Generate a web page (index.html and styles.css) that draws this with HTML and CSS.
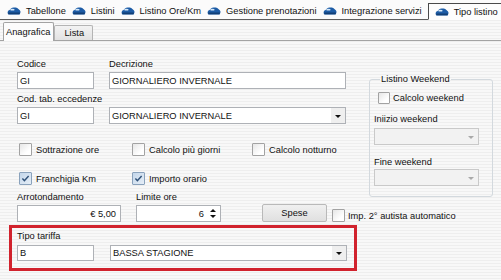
FILE: index.html
```html
<!DOCTYPE html>
<html lang="it">
<head>
    <meta charset="UTF-8">
    <meta name="viewport" content="width=device-width, initial-scale=1.0">
    <title>Tipo listino</title>
    <link rel="stylesheet" href="styles.css">
</head>
<body>
    <div class="toolbar">
        <div class="tool">
            <svg class="car" viewBox="0 0 14 8"><path d="M0.6 5.2 Q0.6 3.3 2.6 3 L4 1.4 Q5 0.5 6.8 0.5 L8.8 0.5 Q10.4 0.6 11.4 1.9 L12.8 3.3 Q13.8 3.8 13.4 5.8 L12.6 7.4 L1.4 7.4 Q0.5 6.8 0.6 5.2Z" fill="#1d5ca6"/><path d="M1.2 5.6 L13 5.6 L12.5 7.3 L1.5 7.3Z" fill="#123f75"/><ellipse cx="5.4" cy="2.7" rx="2.2" ry="0.9" fill="#d6e8f8"/></svg>
            <span>Tabellone</span>
        </div>
        <div class="sep"></div>
        <div class="tool">
            <svg class="car" viewBox="0 0 14 8"><path d="M0.6 5.2 Q0.6 3.3 2.6 3 L4 1.4 Q5 0.5 6.8 0.5 L8.8 0.5 Q10.4 0.6 11.4 1.9 L12.8 3.3 Q13.8 3.8 13.4 5.8 L12.6 7.4 L1.4 7.4 Q0.5 6.8 0.6 5.2Z" fill="#1d5ca6"/><path d="M1.2 5.6 L13 5.6 L12.5 7.3 L1.5 7.3Z" fill="#123f75"/><ellipse cx="5.4" cy="2.7" rx="2.2" ry="0.9" fill="#d6e8f8"/></svg>
            <span>Listini</span>
        </div>
        <div class="sep"></div>
        <div class="tool">
            <svg class="car" viewBox="0 0 14 8"><path d="M0.6 5.2 Q0.6 3.3 2.6 3 L4 1.4 Q5 0.5 6.8 0.5 L8.8 0.5 Q10.4 0.6 11.4 1.9 L12.8 3.3 Q13.8 3.8 13.4 5.8 L12.6 7.4 L1.4 7.4 Q0.5 6.8 0.6 5.2Z" fill="#1d5ca6"/><path d="M1.2 5.6 L13 5.6 L12.5 7.3 L1.5 7.3Z" fill="#123f75"/><ellipse cx="5.4" cy="2.7" rx="2.2" ry="0.9" fill="#d6e8f8"/></svg>
            <span>Listino Ore/Km</span>
        </div>
        <div class="sep"></div>
        <div class="tool">
            <svg class="car" viewBox="0 0 14 8"><path d="M0.6 5.2 Q0.6 3.3 2.6 3 L4 1.4 Q5 0.5 6.8 0.5 L8.8 0.5 Q10.4 0.6 11.4 1.9 L12.8 3.3 Q13.8 3.8 13.4 5.8 L12.6 7.4 L1.4 7.4 Q0.5 6.8 0.6 5.2Z" fill="#1d5ca6"/><path d="M1.2 5.6 L13 5.6 L12.5 7.3 L1.5 7.3Z" fill="#123f75"/><ellipse cx="5.4" cy="2.7" rx="2.2" ry="0.9" fill="#d6e8f8"/></svg>
            <span>Gestione prenotazioni</span>
        </div>
        <div class="sep"></div>
        <div class="tool">
            <svg class="car" viewBox="0 0 14 8"><path d="M0.6 5.2 Q0.6 3.3 2.6 3 L4 1.4 Q5 0.5 6.8 0.5 L8.8 0.5 Q10.4 0.6 11.4 1.9 L12.8 3.3 Q13.8 3.8 13.4 5.8 L12.6 7.4 L1.4 7.4 Q0.5 6.8 0.6 5.2Z" fill="#1d5ca6"/><path d="M1.2 5.6 L13 5.6 L12.5 7.3 L1.5 7.3Z" fill="#123f75"/><ellipse cx="5.4" cy="2.7" rx="2.2" ry="0.9" fill="#d6e8f8"/></svg>
            <span>Integrazione servizi</span>
        </div>
        <div class="tool active">
            <svg class="car" viewBox="0 0 14 8"><path d="M0.6 5.2 Q0.6 3.3 2.6 3 L4 1.4 Q5 0.5 6.8 0.5 L8.8 0.5 Q10.4 0.6 11.4 1.9 L12.8 3.3 Q13.8 3.8 13.4 5.8 L12.6 7.4 L1.4 7.4 Q0.5 6.8 0.6 5.2Z" fill="#1d5ca6"/><path d="M1.2 5.6 L13 5.6 L12.5 7.3 L1.5 7.3Z" fill="#123f75"/><ellipse cx="5.4" cy="2.7" rx="2.2" ry="0.9" fill="#d6e8f8"/></svg>
            <span>Tipo listino</span>
        </div>
    </div>

    <div class="subtabs">
        <div class="subtab current">Anagrafica</div>
        <div class="subtab">Lista</div>
    </div>

    <div class="panel">
        <div class="row row-code">
            <div class="field w-code">
                <label>Codice</label>
                <div class="edit w-code">GI</div>
            </div>
            <div class="field">
                <label>Decrizione</label>
                <div class="edit w-desc">GIORNALIERO INVERNALE</div>
            </div>
        </div>

        <div class="row row-code">
            <div class="field w-code">
                <label>Cod. tab. eccedenze</label>
                <div class="edit w-code">GI</div>
            </div>
            <div class="combo w-desc">
                <span class="combo-text">GIORNALIERO INVERNALE</span>
                <span class="drop"></span>
            </div>
        </div>

        <div class="checks checks-1">
            <div class="check"><span class="box"></span>Sottrazione ore</div>
            <div class="check"><span class="box"></span>Calcolo più giorni</div>
            <div class="check"><span class="box"></span>Calcolo notturno</div>
        </div>

        <div class="checks checks-2">
            <div class="check"><span class="box on"><svg viewBox="0 0 13 13"><polyline points="2.8,6.6 5.2,9 10.2,3.6" fill="none" stroke="#2f5178" stroke-width="1.7"/></svg></span>Franchigia Km</div>
            <div class="check"><span class="box on"><svg viewBox="0 0 13 13"><polyline points="2.8,6.6 5.2,9 10.2,3.6" fill="none" stroke="#2f5178" stroke-width="1.7"/></svg></span>Importo orario</div>
        </div>

        <fieldset class="group">
            <legend>Listino Weekend</legend>
            <div class="check small"><span class="box"></span>Calcolo weekend</div>
            <label class="group-label first">Iniizio weekend</label>
            <div class="combo disabled w-week"><span class="drop"></span></div>
            <label class="group-label">Fine weekend</label>
            <div class="combo disabled w-week"><span class="drop"></span></div>
        </fieldset>

        <div class="row row-amount">
            <div class="field">
                <label>Arrotondamento</label>
                <div class="edit w-round num">€ 5,00</div>
            </div>
            <div class="field">
                <label>Limite ore</label>
                <div class="edit spin w-limit">
                    <span class="spin-value">6</span>
                    <span class="spin-btns"><span class="up"></span><span class="down"></span></span>
                </div>
            </div>
            <button class="btn">Spese</button>
            <div class="check auto"><span class="box"></span>Imp. 2° autista automatico</div>
        </div>

        <div class="highlight">
            <label>Tipo tariffa</label>
            <div class="row">
                <div class="edit w-code thin">B</div>
                <div class="combo w-desc thin">
                    <span class="combo-text">BASSA STAGIONE</span>
                    <span class="drop"></span>
                </div>
            </div>
        </div>
    </div>
</body>
</html>
```

FILE: styles.css
```css
body {
    margin: 0;
    width: 501px;
    height: 280px;
    overflow: hidden;
    font-family: "Liberation Sans", Arial, sans-serif;
    font-size: 9.3px;
    line-height: 12px;
    color: #111;
    background: repeating-linear-gradient(to bottom, #f8f8f8 0, #f8f8f8 2px, #eeeeee 2px, #eeeeee 3px);
}

/* top toolbar */
.toolbar {
    box-sizing: border-box;
    display: flex;
    height: 20px;
    padding: 2px 0 0 7px;
    border-bottom: 1px solid #5c5c5c;
    background: #fbfbfb;
}

.tool {
    display: flex;
    align-items: center;
    gap: 5px;
    white-space: nowrap;
}

.car {
    width: 14px;
    height: 8px;
    flex: none;
}

.sep {
    width: 1px;
    height: 13px;
    margin: 2px 3px 0 3px;
    background: #8a8a8a;
}

.tool.active {
    margin: 1px 0 -1px 6px;
    padding: 1px 3px 0 6px;
    border: 1px solid #4a4a4a;
    border-bottom: 1px solid #fdfdfd;
    background: #fdfdfd;
}

/* sub tabs */
.subtabs {
    box-sizing: border-box;
    display: flex;
    align-items: flex-end;
    height: 21px;
    padding-left: 3px;
    border-bottom: 1px solid #a3a3a3;
}

.subtab {
    box-sizing: border-box;
    height: 15px;
    padding: 1px 8px 0 9px;
    border: 1px solid #b4b4b4;
    border-bottom: none;
    border-radius: 2px 2px 0 0;
    background: linear-gradient(to bottom, #f3f3f3, #e2e2e2);
}

.subtab.current {
    height: 19px;
    margin-bottom: -1px;
    padding: 3px 3px 0 2px;
    border-color: #a3a3a3;
    background: #fcfcfc;
}

/* form panel */
.panel {
    display: grid;
    grid-template-columns: 352px 124px;
    grid-template-rows: 35px 35px 37px 25px 34px 48px;
    padding: 17px 0 0 17px;
}

.row {
    display: flex;
    align-items: flex-end;
    gap: 15px;
    grid-column: 1;
}

.row-code {
    align-items: flex-start;
}

.row-code .combo {
    margin-top: 14px;
}

.field {
    flex: none;
}

.field label {
    display: block;
    margin-bottom: 2px;
    white-space: nowrap;
}

.edit,
.combo {
    box-sizing: border-box;
    display: flex;
    align-items: center;
    height: 17px;
    padding: 0 2px;
    border: 1px solid #aeb1b6;
    background: #fff;
    white-space: nowrap;
}

.thin {
    height: 16px;
}

.w-code { width: 77px; }
.w-desc { width: 237px; }
.w-round { width: 104px; }
.w-limit { width: 85px; }
.w-week { width: 105px; }

.num {
    justify-content: flex-end;
    padding-right: 4px;
}

.combo {
    padding-right: 0;
}

.combo-text {
    flex: 1;
}

.drop {
    display: flex;
    align-items: center;
    justify-content: center;
    align-self: stretch;
    width: 14px;
    margin-left: auto;
    background: #efefef;
}

.drop::after {
    content: "";
    border-left: 3px solid transparent;
    border-right: 3px solid transparent;
    border-top: 3px solid #111;
    margin-top: 1px;
}

.combo.disabled {
    height: 17px;
    border-color: #c9c9c9;
    background: #f2f2f2;
}

.combo.disabled .drop {
    background: transparent;
}

.combo.disabled .drop::after {
    border-top-color: #a9a9a9;
}

/* spin edit */
.spin {
    padding-right: 1px;
}

.spin-value {
    flex: 1;
    text-align: right;
    padding-right: 3px;
}

.spin-btns {
    display: flex;
    flex-direction: column;
    justify-content: center;
    align-items: center;
    gap: 3px;
    width: 12px;
    align-self: stretch;
}

.spin-btns .up {
    border-left: 3px solid transparent;
    border-right: 3px solid transparent;
    border-bottom: 3px solid #111;
}

.spin-btns .down {
    border-left: 3px solid transparent;
    border-right: 3px solid transparent;
    border-top: 3px solid #111;
}

/* checkboxes */
.checks {
    display: grid;
    grid-template-columns: 113px 120px auto;
    align-items: start;
    grid-column: 1;
    padding-left: 2px;
}

.checks-1 { padding-top: 15px; }
.checks-2 { padding-top: 7px; }

.check {
    display: flex;
    align-items: center;
    gap: 4px;
    white-space: nowrap;
}

.box {
    box-sizing: border-box;
    display: flex;
    width: 13px;
    height: 13px;
    flex: none;
    border: 1px solid #a2a2a2;
    border-radius: 1px;
    background: linear-gradient(135deg, #e6e6e6, #ffffff 70%);
}

.box.on {
    border-color: #8aa2bc;
    background: linear-gradient(135deg, #c3d6ea, #e6eef7);
}

.box svg {
    width: 11px;
    height: 11px;
}

/* group box */
.group {
    grid-column: 2;
    grid-row: 1 / 5;
    align-self: start;
    display: flex;
    flex-direction: column;
    min-width: 0;
    margin: 15px 0 0 0;
    padding: 0 4px 10px 4px;
    border: 1px solid #d3d9de;
    border-radius: 3px;
}

.group legend {
    margin-left: 6px;
    padding: 0 1px;
    line-height: 12px;
}

.check.small {
    margin: 7px 0 0 4px;
    gap: 3px;
}

.check.small .box {
    width: 12px;
    height: 12px;
}

.group-label {
    margin: 11px 0 1px 0;
}

.group-label.first {
    margin: 9px 0 3px 0;
}

/* amount row */
.row-amount {
    grid-column: 1 / -1;
    gap: 0;
    padding-bottom: 2px;
}

.row-amount .field + .field {
    margin-left: 15px;
}

.btn {
    box-sizing: border-box;
    width: 65px;
    height: 18px;
    margin: 0 0 0 41px;
    padding: 0;
    font: inherit;
    color: #111;
    border: 1px solid #b9b9b9;
    border-radius: 2px;
    background: linear-gradient(to bottom, #f0f0f0, #e0e0e0);
}

.check.auto {
    gap: 3px;
    margin-left: 5px;
}

/* red highlight around Tipo tariffa */
.highlight {
    box-sizing: border-box;
    grid-column: 1;
    width: 348px;
    height: 46px;
    margin: 1px 0 0 -8px;
    padding: 2px 0 0 5px;
    border: 3px solid #d1222d;
}

.highlight label {
    display: block;
    margin-bottom: 3px;
}

.highlight .row {
    gap: 16px;
}
```
